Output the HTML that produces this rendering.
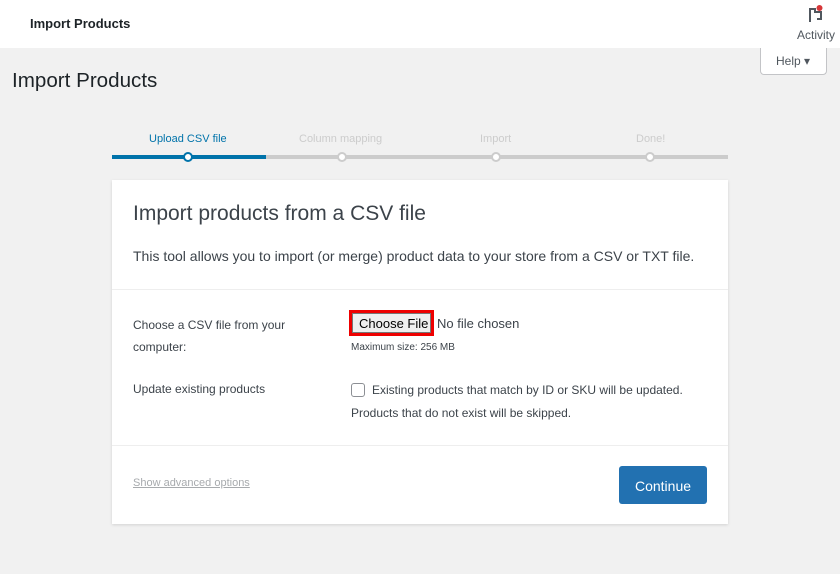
<!DOCTYPE html>
<html><head><style>
*{box-sizing:border-box;margin:0;padding:0}
body{width:840px;height:574px;background:#f1f1f1;font-family:"Liberation Sans",sans-serif;color:#3c434a;position:relative;overflow:hidden}
.top{position:absolute;left:0;top:0;width:840px;height:48px;background:#fff}
.abs{position:absolute;white-space:nowrap}
</style></head><body>
<div class="top"></div>
<div class="abs" style="left:30px;top:16px;font-size:13px;font-weight:bold;color:#1d2327">Import Products</div>
<svg class="abs" style="left:806px;top:4px" width="20" height="20" viewBox="0 0 20 20"><path d="M4 4v14M4 5h5v3h6v7h-4" fill="none" stroke="#50575e" stroke-width="2"/><circle cx="13.5" cy="4" r="3" fill="#d63638"/></svg>
<div class="abs" style="left:797px;top:28px;font-size:12px;color:#50575e">Activity</div>
<div class="abs" style="left:760px;top:48px;width:67px;height:27px;background:#fff;border:1px solid #c3c4c7;border-top:0;border-radius:0 0 4px 4px;font-size:12px;color:#50575e;padding:6px 0 0 15px">Help ▾</div>
<div class="abs" style="left:12px;top:69px;font-size:20.6px;color:#1d2327">Import Products</div>
<div class="abs" style="left:112px;top:155px;width:616px;height:4px;background:#ccc"></div>
<div class="abs" style="left:112px;top:155px;width:154px;height:4px;background:#0073aa"></div>
<div class="abs" style="left:149px;top:133px;font-size:11px;color:#0073aa">Upload CSV file</div>
<div class="abs" style="left:299px;top:133px;font-size:11px;color:#ccc">Column mapping</div>
<div class="abs" style="left:480px;top:133px;font-size:11px;color:#ccc">Import</div>
<div class="abs" style="left:636px;top:133px;font-size:11px;color:#ccc">Done!</div>
<div class="abs" style="left:183px;top:152px;width:10px;height:10px;border-radius:50%;background:#fff;border:2.5px solid #0073aa"></div>
<div class="abs" style="left:337px;top:152px;width:10px;height:10px;border-radius:50%;background:#fff;border:2.5px solid #ccc"></div>
<div class="abs" style="left:491px;top:152px;width:10px;height:10px;border-radius:50%;background:#fff;border:2.5px solid #ccc"></div>
<div class="abs" style="left:645px;top:152px;width:10px;height:10px;border-radius:50%;background:#fff;border:2.5px solid #ccc"></div>
<div class="abs" style="left:112px;top:180px;width:616px;height:344px;background:#fff;box-shadow:0 1px 3px rgba(0,0,0,.13)"></div>
<div class="abs" style="left:133px;top:202px;font-size:21px;color:#3c434a">Import products from a CSV file</div>
<div class="abs" style="left:133px;top:248px;font-size:14px">This tool allows you to import (or merge) product data to your store from a CSV or TXT file.</div>
<div class="abs" style="left:112px;top:289px;width:616px;height:1px;background:#eee"></div>
<div class="abs" style="left:133px;top:314px;font-size:12px;line-height:22px">Choose a CSV file from your<br>computer:</div>
<div class="abs" style="left:349px;top:310px;width:85px;height:26px;border:3px solid #e00"></div>
<div class="abs" style="left:352px;top:313px;width:79px;height:20px;background:#efefef;border:1px solid #767676;font-size:13px;color:#000;padding:2px 0 0 6px">Choose File</div>
<div class="abs" style="left:437px;top:316px;font-size:13px;color:#3c434a">No file chosen</div>
<div class="abs" style="left:351px;top:342px;font-size:10px">Maximum size: 256 MB</div>
<div class="abs" style="left:133px;top:382px;font-size:12px">Update existing products</div>
<div class="abs" style="left:351px;top:383px;width:14px;height:14px;border:1px solid #8c8f94;border-radius:3px"></div>
<div class="abs" style="left:372px;top:383px;font-size:12px">Existing products that match by ID or SKU will be updated.</div>
<div class="abs" style="left:351px;top:406px;font-size:12px">Products that do not exist will be skipped.</div>
<div class="abs" style="left:112px;top:445px;width:616px;height:1px;background:#eee"></div>
<div class="abs" style="left:133px;top:477px;font-size:11px;color:#a7aaad;text-decoration:underline">Show advanced options</div>
<div class="abs" style="left:619px;top:466px;width:88px;height:38px;background:#2271b1;border-radius:3px;color:#fff;font-size:14px;text-align:center;line-height:40px">Continue</div>
</body></html>
